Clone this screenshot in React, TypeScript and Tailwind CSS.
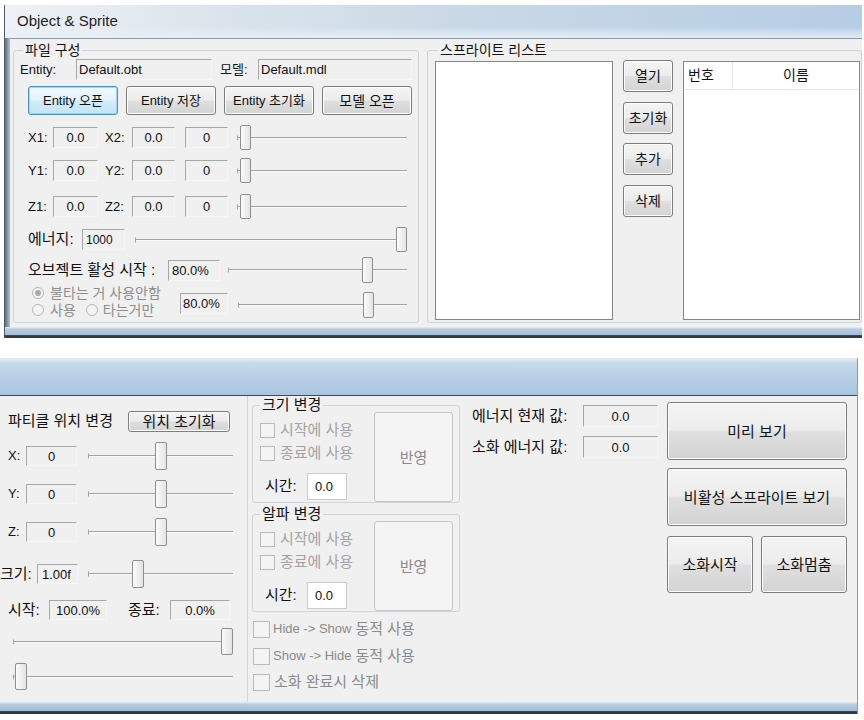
import clsx from 'clsx'
import type { ReactNode } from 'react'

const sans = "font-['Liberation_Sans','Noto_Sans_CJK_KR',sans-serif]"

function Btn({
  children,
  className,
  focused,
  disabled,
}: {
  children: ReactNode
  className?: string
  focused?: boolean
  disabled?: boolean
}) {
  return (
    <button
      type="button"
      className={clsx(
        'flex shrink-0 items-center justify-center whitespace-nowrap rounded-[3px] border leading-none',
        disabled
          ? 'border-[#c2c6c9] bg-[#f4f4f4] text-[#8a8a8a]'
          : focused
            ? 'border-[#4a93c9] bg-[linear-gradient(180deg,#f2f9fe_0%,#e3f3fc_48%,#d2ecfa_52%,#c3e4f6_100%)] text-[#111] shadow-[inset_0_0_0_1px_#9fd4f2]'
            : 'border-[#7d7d7d] bg-[linear-gradient(180deg,#f4f4f4_0%,#ececec_48%,#dfdfdf_52%,#d3d3d3_100%)] text-[#111] shadow-[inset_0_0_0_1px_#fcfcfc]',
        className,
      )}
    >
      {children}
    </button>
  )
}

function ReadBox({ children, className }: { children?: ReactNode; className?: string }) {
  return (
    <div
      className={clsx(
        'flex shrink-0 items-center whitespace-nowrap border-t border-l border-r border-b border-t-[#a7a7a7] border-l-[#a7a7a7] border-r-[#f6f6f6] border-b-[#f6f6f6] bg-[#f0f0f0] leading-none text-[#111]',
        className,
      )}
    >
      {children}
    </div>
  )
}

function Slider({ value, thumbW, className }: { value: number; thumbW: number; className?: string }) {
  return (
    <div className={clsx('relative shrink-0', className)}>
      <div className="absolute inset-x-0 top-1/2 h-[2px] -translate-y-1/2 border-t border-b border-t-[#a3a3a3] border-b-[#fafafa]" />
      <div className="absolute left-0 top-1/2 h-[5px] w-px -translate-y-1/2 bg-[#a3a3a3]" />
      <div
        className={clsx(
          'absolute inset-y-0 rounded-[2px] border border-[#8f8f8f] bg-[linear-gradient(90deg,#fbfbfb,#e4e4e4)]',
          thumbW === 12 ? 'w-[12px]' : 'w-[11px]',
        )}
        style={{ left: `calc((100% - ${thumbW}px) * ${value})` }}
      />
    </div>
  )
}

function Check({ big }: { big?: boolean }) {
  return (
    <span
      className={clsx(
        'inline-block shrink-0 border border-[#b9b9b9] bg-[#f4f4f4]',
        big ? 'h-[17px] w-[17px]' : 'h-[15px] w-[15px]',
      )}
    />
  )
}

function Radio({ checked }: { checked?: boolean }) {
  return (
    <span className="flex h-[12px] w-[12px] shrink-0 items-center justify-center rounded-full border border-[#b7b7b7] bg-[#f4f4f4]">
      {checked && <span className="h-[6px] w-[6px] rounded-full bg-[#a9a9a9]" />}
    </span>
  )
}

const xyzRows = [
  { a: 'X', mt: 'mt-[10px]' },
  { a: 'Y', mt: 'mt-[8px]' },
  { a: 'Z', mt: 'mt-[11px]' },
]

function FileGroup() {
  return (
    <fieldset className="h-[282px] w-[406px] shrink-0 rounded-[3px] border border-[#cfd4d8]">
      <legend className="ml-[9px] px-[2px] text-[14px] leading-[18px]">파일 구성</legend>

      <div className="flex h-[21px] items-center pl-[6px] text-[13px]">
        <span className="w-[56px]">Entity:</span>
        <ReadBox className="h-[21px] w-[136px] pl-[2px] text-[13px]">Default.obt</ReadBox>
        <span className="ml-[8px] w-[38px]">모델:</span>
        <ReadBox className="h-[21px] w-[154px] pl-[2px] text-[13px]">Default.mdl</ReadBox>
      </div>

      <div className="mt-[6px] flex gap-[8px] pl-[14px]">
        <Btn focused className="h-[29px] w-[90px] text-[13px]">Entity 오픈</Btn>
        <Btn className="h-[29px] w-[90px] text-[13px]">Entity 저장</Btn>
        <Btn className="h-[29px] w-[90px] text-[13px]">Entity 초기화</Btn>
        <Btn className="h-[29px] w-[90px] text-[14px]">모델 오픈</Btn>
      </div>

      {xyzRows.map((r) => (
        <div key={r.a} className={clsx('flex h-[25px] items-center pl-[14px] text-[13px]', r.mt)}>
          <span className="w-[25px]">{r.a}1:</span>
          <ReadBox className="h-[21px] w-[45px] justify-center text-[13px]">0.0</ReadBox>
          <span className="ml-[7px] w-[27px]">{r.a}2:</span>
          <ReadBox className="h-[21px] w-[43px] justify-center text-[13px]">0.0</ReadBox>
          <ReadBox className="ml-[10px] h-[21px] w-[43px] justify-center text-[13px]">0</ReadBox>
          <Slider value={0.02} thumbW={11} className="ml-[9px] h-[25px] w-[170px]" />
        </div>
      ))}

      <div className="mt-[8px] flex h-[25px] items-center pl-[14px]">
        <span className="w-[54px] text-[15px]">에너지:</span>
        <ReadBox className="h-[21px] w-[43px] pl-[3px] text-[12px]">1000</ReadBox>
        <Slider value={1} thumbW={11} className="ml-[10px] h-[25px] w-[272px]" />
      </div>

      <div className="mt-[5px] flex h-[26px] items-center pl-[14px]">
        <span className="w-[140px] whitespace-nowrap text-[15px]">오브젝트 활성 시작 :</span>
        <ReadBox className="h-[21px] w-[52px] pl-[3px] text-[13px]">80.0%</ReadBox>
        <Slider value={0.8} thumbW={11} className="ml-[8px] h-[26px] w-[179px]" />
      </div>

      <div className="mt-[1px] flex h-[35px] items-center pl-[18px]">
        <div className="flex w-[148px] flex-col text-[14px] leading-[17px] text-[#8e8e8e]">
          <div className="flex items-center gap-[6px] whitespace-nowrap">
            <Radio checked />
            <span>불타는 거 사용안함</span>
          </div>
          <div className="flex items-center whitespace-nowrap">
            <Radio />
            <span className="ml-[6px]">사용</span>
            <span className="ml-[10px]">
              <Radio />
            </span>
            <span className="ml-[5px]">타는거만</span>
          </div>
        </div>
        <ReadBox className="mt-[4px] h-[21px] w-[48px] pl-[2px] text-[13px]">80.0%</ReadBox>
        <Slider value={0.79} thumbW={11} className="ml-[10px] mt-[6px] h-[26px] w-[169px]" />
      </div>
    </fieldset>
  )
}

function SpriteGroup() {
  return (
    <fieldset className="h-[282px] w-[435px] shrink-0 rounded-[3px] border border-[#cfd4d8]">
      <legend className="ml-[10px] px-[2px] text-[14px] leading-[18px]">스프라이트 리스트</legend>
      <div className="flex pl-[7px] pt-[2px]">
        <div className="h-[259px] w-[178px] shrink-0 border border-[#828790] bg-white" />
        <div className="-mt-px ml-[10px] flex w-[50px] shrink-0 flex-col text-[14px]">
          <Btn className="h-[32px] w-[50px]">열기</Btn>
          <Btn className="mt-[10px] h-[32px] w-[50px]">초기화</Btn>
          <Btn className="mt-[9px] h-[32px] w-[50px]">추가</Btn>
          <Btn className="mt-[10px] h-[32px] w-[50px]">삭제</Btn>
        </div>
        <div className="ml-[10px] h-[259px] w-[177px] shrink-0 border border-[#828790] bg-white">
          <div className="flex h-[28px] border-b border-b-[#e3e6ea] text-[14px]">
            <div className="flex w-[49px] items-center border-r border-r-[#e3e6ea] pl-[4px]">번호</div>
            <div className="flex flex-1 items-center justify-center">이름</div>
          </div>
        </div>
      </div>
    </fieldset>
  )
}

function TopWindow() {
  return (
    <div className="ml-[4px] mt-[5px] flex h-[333px] w-[858px] flex-col border-l border-l-[#505860]">
      <div className="flex h-[33px] items-center bg-[linear-gradient(180deg,rgba(255,255,255,0)_65%,rgba(232,239,246,0.9)_100%),linear-gradient(90deg,#eef2f6_0%,#dbe4ec_25%,#c9d8e6_55%,#b5cde5_100%)] pl-[12px] text-[15px] text-[#1e1e1e]">
        Object &amp; Sprite
      </div>
      <div className="flex h-[289px]">
        <div className="w-[5px] bg-[linear-gradient(90deg,#5f6f80,#a9c0d6)]" />
        <div className="flex flex-1 gap-[8px] border-t border-t-[#8d9aa6] bg-[#f0f0f0] pl-[3px] pt-[2px]">
          <FileGroup />
          <SpriteGroup />
        </div>
      </div>
      <div className="h-[11px] bg-[linear-gradient(180deg,#e6edf3_0%,#b7cce0_20%,#a4bed8_72%,#2f3842_78%,#2f3842_100%)]" />
    </div>
  )
}

const bottomXyz = ['X', 'Y', 'Z']

function ChangeGroup({ title, mt }: { title: string; mt?: string }) {
  return (
    <fieldset className={clsx('w-[208px] shrink-0 rounded-[3px] border border-[#cfd4d8]', mt)}>
      <legend className="ml-[7px] px-[2px] text-[15px] leading-[18px]">{title}</legend>
      <div className="flex">
        <div className="flex w-[121px] flex-col text-[15px]">
          <div className="mt-[6px] flex h-[20px] items-center pl-[7px] text-[#a3a3a3]">
            <Check />
            <span className="ml-[5px] whitespace-nowrap">시작에 사용</span>
          </div>
          <div className="mt-[3px] flex h-[20px] items-center pl-[7px] text-[#a3a3a3]">
            <Check />
            <span className="ml-[5px] whitespace-nowrap">종료에 사용</span>
          </div>
          <div className="mt-[10px] flex h-[27px] items-center pl-[12px]">
            <span className="w-[42px]">시간:</span>
            <div className="flex h-[27px] w-[40px] items-center border border-[#c9ccd1] bg-white pl-[7px] text-[13px]">0.0</div>
          </div>
        </div>
        <Btn disabled className="-mt-[2px] h-[90px] w-[79px] text-[15px]">
          반영
        </Btn>
      </div>
    </fieldset>
  )
}

function BottomWindow() {
  return (
    <div className="mt-[20px] flex h-[356px] w-[858px] flex-col border-r border-r-[#8f9aa5]">
      <div className="h-[38px] border-b border-b-[#3f4b57] bg-[linear-gradient(180deg,#e4edf6_0%,#c6d8eb_15%,#b6cde5_60%,#abc5e0_100%)]" />
      <div className="flex h-[306px] bg-[#f0f0f0]">
        <div className="flex w-[248px] shrink-0 flex-col border-r border-r-[#d0d5d9]">
          <div className="mt-[15px] flex h-[21px] items-center pl-[8px]">
            <span className="w-[120px] whitespace-nowrap text-[15px]">파티클 위치 변경</span>
            <Btn className="h-[21px] w-[102px] text-[15px]">위치 초기화</Btn>
          </div>
          {bottomXyz.map((a) => (
            <div key={a} className="mt-[10px] flex h-[28px] items-center pl-[8px]">
              <span className="w-[18px] text-[13px]">{a}:</span>
              <ReadBox className="h-[20px] w-[51px] justify-center text-[13px]">0</ReadBox>
              <Slider value={0.5} thumbW={12} className="ml-[11px] h-[28px] w-[145px]" />
            </div>
          ))}
          <div className="mt-[14px] flex h-[28px] items-center">
            <span className="w-[37px] text-[15px]">크기:</span>
            <ReadBox className="h-[20px] w-[41px] pl-[4px] text-[13px]">1.00f</ReadBox>
            <Slider value={0.33} thumbW={12} className="ml-[10px] h-[28px] w-[145px]" />
          </div>
          <div className="mt-[12px] flex h-[20px] items-center pl-[8px] text-[15px]">
            <span className="w-[41px]">시작:</span>
            <ReadBox className="h-[20px] w-[58px] justify-center text-[13px]">100.0%</ReadBox>
            <span className="ml-[21px] w-[42px]">종료:</span>
            <ReadBox className="h-[20px] w-[60px] justify-center text-[13px]">0.0%</ReadBox>
          </div>
          <Slider value={1} thumbW={12} className="ml-[13px] mt-[8px] h-[27px] w-[220px]" />
          <Slider value={0.01} thumbW={12} className="ml-[13px] mt-[8px] h-[27px] w-[220px]" />
        </div>

        <div className="ml-[4px] flex w-[208px] shrink-0 flex-col">
          <ChangeGroup title="크기 변경" />
          <ChangeGroup title="알파 변경" mt="mt-[2px]" />
          <div className="mt-[7px] flex h-[20px] items-center pl-px text-[#8a8a8a]">
            <Check big />
            <span className="ml-[3px] whitespace-nowrap text-[13px]">Hide -&gt; Show</span>
            <span className="ml-[4px] whitespace-nowrap text-[15px]">동적 사용</span>
          </div>
          <div className="mt-[7px] flex h-[20px] items-center pl-px text-[#8a8a8a]">
            <Check big />
            <span className="ml-[3px] whitespace-nowrap text-[13px]">Show -&gt; Hide</span>
            <span className="ml-[4px] whitespace-nowrap text-[15px]">동적 사용</span>
          </div>
          <div className="mt-[6px] flex h-[20px] items-center pl-px text-[#8a8a8a]">
            <Check big />
            <span className="ml-[4px] whitespace-nowrap text-[15px]">소화 완료시 삭제</span>
          </div>
        </div>

        <div className="ml-[12px] flex shrink-0 flex-col pt-[9px]">
          <div className="flex h-[22px] items-center">
            <span className="w-[111px] whitespace-nowrap text-[15px]">에너지 현재 값:</span>
            <ReadBox className="h-[22px] w-[75px] justify-center text-[13px]">0.0</ReadBox>
          </div>
          <div className="mt-[9px] flex h-[22px] items-center">
            <span className="w-[111px] whitespace-nowrap text-[15px]">소화 에너지 값:</span>
            <ReadBox className="h-[22px] w-[75px] justify-center text-[13px]">0.0</ReadBox>
          </div>
        </div>

        <div className="ml-[9px] flex w-[180px] shrink-0 flex-col pt-[6px] text-[15px]">
          <Btn className="h-[58px] w-[180px]">미리 보기</Btn>
          <Btn className="mt-[8px] h-[58px] w-[180px]">비활성 스프라이트 보기</Btn>
          <div className="mt-[10px] flex gap-[8px]">
            <Btn className="h-[57px] w-[86px]">소화시작</Btn>
            <Btn className="h-[57px] w-[86px]">소화멈춤</Btn>
          </div>
        </div>
      </div>
      <div className="h-[12px] bg-[linear-gradient(180deg,#e6edf3_0%,#b7cce0_20%,#a4bed8_72%,#2f3842_80%,#2f3842_100%)]" />
    </div>
  )
}

export default function App() {
  return (
    <div className={clsx(sans, 'h-[720px] w-[864px] overflow-hidden bg-white text-[#111]')}>
      <TopWindow />
      <BottomWindow />
    </div>
  )
}
